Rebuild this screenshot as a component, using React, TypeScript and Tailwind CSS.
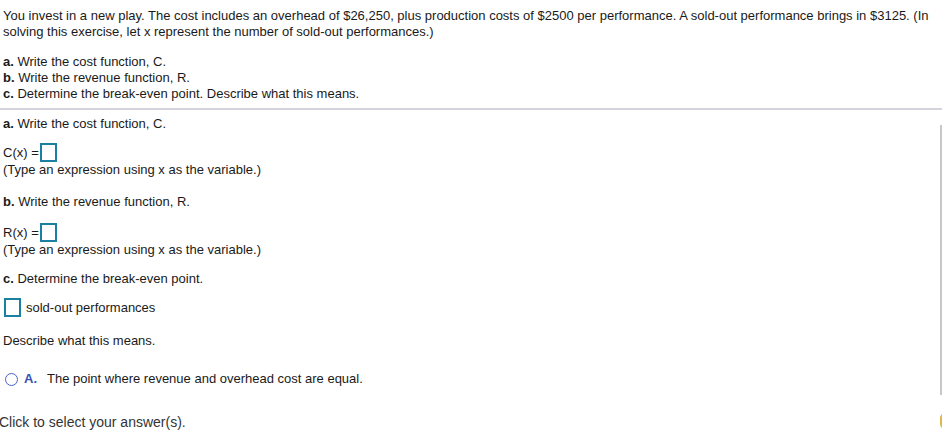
import React from "react";

function Box({ className = "" }: { className?: string }) {
  return <span className={`inline-block w-[17px] h-[19px] border-2 border-[#1b7fa1] bg-white align-middle ${className}`} />;
}

export default function App() {
  return (
    <div className="relative w-[942px] h-[436px] overflow-hidden bg-white text-[13px] leading-[16px] text-[#1a1a1a]" style={{ fontFamily: '"Liberation Sans", Arial, sans-serif' }}>
      <div className="px-[3px] pt-[8px]">
        <p>
          You invest in a new play. The cost includes an overhead of $26,250, plus production costs of $2500 per performance. A sold-out performance brings in $3125. (In solving this exercise, let x represent the number of sold-out performances.)
        </p>
        <div className="mt-[14px]">
          <p><b>a.</b> Write the cost function, C.</p>
          <p><b>b.</b> Write the revenue function, R.</p>
          <p><b>c.</b> Determine the break-even point. Describe what this means.</p>
        </div>
      </div>
      <div className="mt-[6px] border-t-2 border-[#d4d4dc]" />
      <div className="relative px-[3px]">
        <p className="mt-[6px]"><b>a.</b> Write the cost function, C.</p>
        <div className="mt-[11px] flex items-center h-[19px]">
          <span>C(x) =</span>
          <Box className="ml-[1px]" />
        </div>
        <p className="mt-[0px]">(Type an expression using x as the variable.)</p>
        <p className="mt-[16px]"><b>b.</b> Write the revenue function, R.</p>
        <div className="mt-[13px] flex items-center h-[19px]">
          <span>R(x) =</span>
          <Box className="ml-[1px]" />
        </div>
        <p>(Type an expression using x as the variable.)</p>
        <p className="mt-[13px]"><b>c.</b> Determine the break-even point.</p>
        <div className="mt-[11px] flex items-center h-[19px]">
          <Box className="ml-[1px]" />
          <span className="ml-[5px]">sold-out performances</span>
        </div>
        <p className="mt-[16px]">Describe what this means.</p>
        <div className="mt-[22px] flex items-center">
          <span className="ml-[2px] inline-block w-[13px] h-[13px] rounded-full border-[1.5px] border-[#4a63c9]" />
          <b className="ml-[6px] text-[#3a4fb5]">A.</b>
          <span className="ml-[10px]">The point where revenue and overhead cost are equal.</span>
        </div>
        <p className="mt-[27px] -ml-[4px] text-[14px] text-[#333]">Click to select your answer(s).</p>
      </div>
      <div className="absolute right-0 top-[125px] h-[270px] w-[2px] bg-[#c8c8c8]" />
      <div className="absolute right-[-8px] top-[413px] w-[10px] h-[16px] rounded-full bg-[#e0b84a]" />
    </div>
  );
}
